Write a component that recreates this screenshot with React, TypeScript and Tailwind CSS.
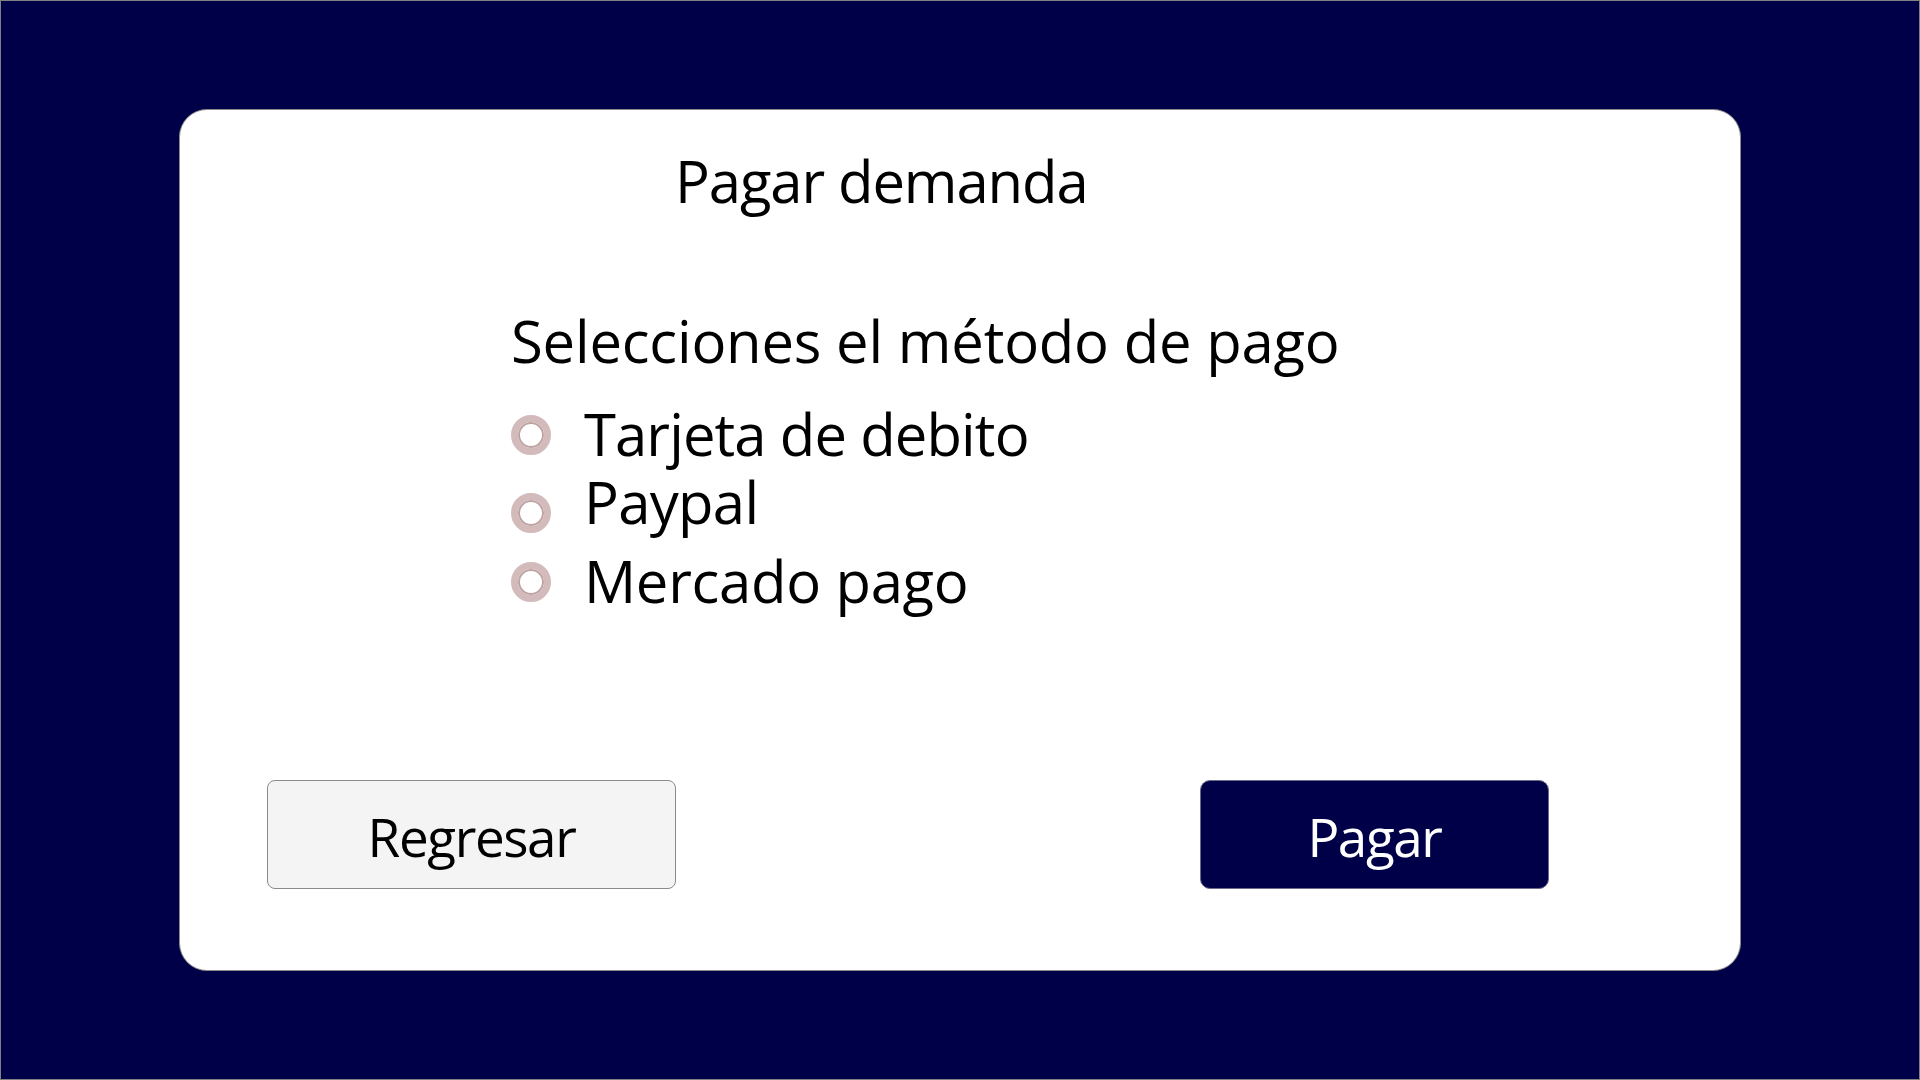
import React from "react";

const OPTIONS = [
  { label: "Tarjeta de debito", rowGap: "mt-[35px]", radioTop: "mt-[10px]", track: "tracking-[-0.9px]" },
  { label: "Paypal", rowGap: "mt-[10px]", radioTop: "mt-[20px]", track: "tracking-[-0.7px]" },
  { label: "Mercado pago", rowGap: "mt-[19px]", radioTop: "mt-[10px]", track: "tracking-[-0.3px]" },
];

function Radio({ className }: { className: string }) {
  return (
    <span
      className={`block w-[40px] h-[40px] shrink-0 rounded-full border-[7px] border-[#d3bbbb] bg-white shadow-[inset_0_0_0_2px_#bfa2a2] ${className}`}
    />
  );
}

export default function App() {
  return (
    <div
      className="w-screen h-screen flex border border-[#808080] bg-[#000048] px-[178px] py-[108px]"
      style={{ fontFamily: '"Open Sans", "Noto Sans", sans-serif' }}
    >
      <div className="flex-1 flex flex-col bg-white rounded-[28px] border border-[#8a8a8a]">
        <h1 className="pt-[42px] pl-[495px] text-[58px] leading-[58px] tracking-[-1.1px] font-normal text-black">
          Pagar demanda
        </h1>

        <div className="pl-[331px] mt-[102px] flex flex-col">
          <p className="text-[58px] leading-[58px] tracking-[-0.2px] text-black">Selecciones el método de pago</p>
          {OPTIONS.map((o) => (
            <label key={o.label} className={`flex items-start gap-[33px] ${o.rowGap}`}>
              <Radio className={o.radioTop} />
              <span className={`text-[58px] leading-[58px] text-black ${o.track}`}>{o.label}</span>
            </label>
          ))}
        </div>

        <div className="flex mt-[170px] pl-[87px]">
          <button className="w-[409px] h-[109px] flex items-center justify-center pt-[4px] rounded-[8px] border border-[#8a8a8a] bg-[#f4f4f4] text-[53px] leading-[53px] tracking-[-1.4px] text-black">
            Regresar
          </button>
          <button className="ml-[524px] w-[349px] h-[109px] flex items-center justify-center pt-[4px] rounded-[10px] border border-[#6a6a8a] bg-[#000048] text-[53px] leading-[53px] tracking-[-1.4px] text-white">
            Pagar
          </button>
        </div>
      </div>
    </div>
  );
}
